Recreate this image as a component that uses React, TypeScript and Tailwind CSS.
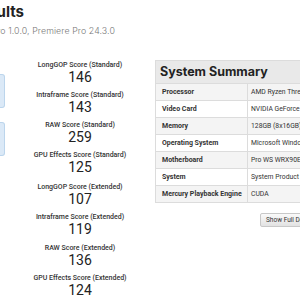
import React from "react";

const standard = [
  { label: "LongGOP Score (Standard)", value: "146" },
  { label: "Intraframe Score (Standard)", value: "143" },
  { label: "RAW Score (Standard)", value: "259" },
  { label: "GPU Effects Score (Standard)", value: "125" },
];
const extended = [
  { label: "LongGOP Score (Extended)", value: "107" },
  { label: "Intraframe Score (Extended)", value: "119" },
  { label: "RAW Score (Extended)", value: "136" },
  { label: "GPU Effects Score (Extended)", value: "124" },
];

const rows = [
  ["Processor", "AMD Ryzen Threadripper PRO 7995WX 96-Cores"],
  ["Video Card", "NVIDIA GeForce RTX 4090 24GB"],
  ["Memory", "128GB (8x16GB)"],
  ["Operating System", "Microsoft Windows 11 Pro"],
  ["Motherboard", "Pro WS WRX90E-SAGE SE"],
  ["System", "System Product Name"],
  ["Mercury Playback Engine", "CUDA"],
];

function Score({ label, value }: { label: string; value: string }) {
  return (
    <div className="flex flex-col items-center h-[30.3px]">
      <div className="text-[7px] leading-[9px] font-medium text-[#333] whitespace-nowrap">{label}</div>
      <div className="text-[14px] leading-[15px] text-[#222]">{value}</div>
    </div>
  );
}

export default function App() {
  return (
    <div className="w-[300px] h-[300px] overflow-hidden bg-white font-['Roboto',sans-serif]">
      <div className="pt-[3px]">
        <div className="w-[24px] flex justify-end">
          <h1 className="whitespace-nowrap text-[15px] leading-[18px] font-bold text-[#222] font-['Inter',sans-serif]">
            Results
          </h1>
        </div>
        <div className="w-[115px] flex justify-end mt-[5px]">
          <p className="whitespace-nowrap text-[8.8px] leading-[10px] font-light tracking-[0.1px] text-[#777] font-['Inter',sans-serif]">
            PugetBench for Premiere Pro 1.0.0, Premiere Pro 24.3.0
          </p>
        </div>
      </div>

      <div className="flex items-start mt-[24px]">
        <div className="w-[5px] shrink-0 flex flex-col gap-[14px] mt-[14px]">
          <div className="h-[34px] bg-[#dbe9f7] border border-l-0 border-[#bcd5ec] rounded-r-[3px]" />
          <div className="h-[34px] bg-[#dbe9f7] border border-l-0 border-[#bcd5ec] rounded-r-[3px]" />
        </div>

        <div className="w-[150px] shrink-0 flex flex-col items-center pt-[0.5px]">
          {standard.map((s) => (
            <Score key={s.label} {...s} />
          ))}
          <div className="h-[1.5px]" />
          {extended.map((s) => (
            <Score key={s.label} {...s} />
          ))}
        </div>

        <div className="w-[250px] shrink-0 flex flex-col">
          <div className="border border-[#dcdcdc]">
            <div className="h-[22px] bg-[#e9e9e9] px-[4px] flex items-center">
              <span className="text-[12.5px] font-bold text-[#222] font-['Inter',sans-serif]">System Summary</span>
            </div>
            {rows.map(([k, v], i) => (
              <div
                key={k}
                className={`grid grid-cols-[92px_1fr] h-[17px] border-t border-[#dcdcdc] ${i % 2 === 0 ? "bg-[#f4f4f4]" : "bg-white"}`}
              >
                <div className="flex items-center pl-[6px] border-r border-[#dcdcdc] text-[7px] font-bold text-[#333] whitespace-nowrap">
                  {k}
                </div>
                <div className="flex items-center pl-[3px] text-[6.8px] text-[#333] whitespace-nowrap">{v}</div>
              </div>
            ))}
          </div>
          <div className="flex h-[14px] mt-[10px] pl-[105px] leading-none">
            <button className="h-[14px] px-[5px] text-[6.5px] leading-none text-[#333] whitespace-nowrap border border-[#c8c8c8] rounded-[2px] bg-gradient-to-b from-[#fafafa] to-[#e2e2e2]">
              Show Full Details
            </button>
          </div>
        </div>
      </div>
    </div>
  );
}
